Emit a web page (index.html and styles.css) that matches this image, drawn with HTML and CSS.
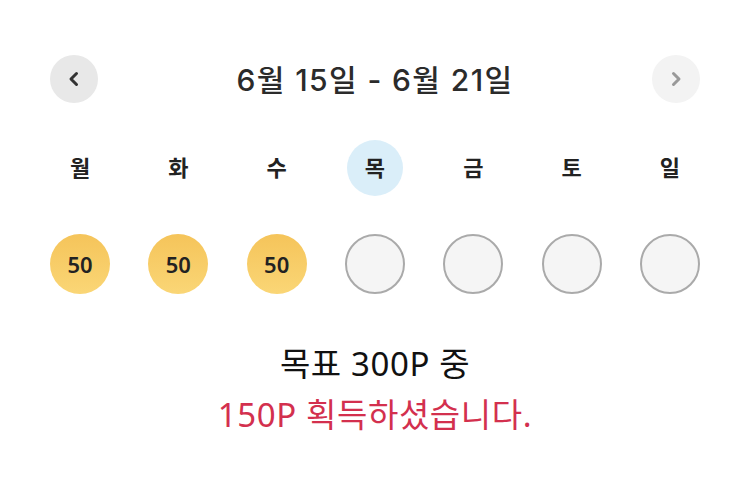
FILE: index.html
```html
<!DOCTYPE html>
<html lang="ko">
<head>
    <meta charset="UTF-8">
    <meta name="viewport" content="width=device-width, initial-scale=1.0">
    <title>출석 체크</title>
    <link rel="stylesheet" href="styles.css">
</head>
<body>
    <div class="card">
        <div class="week-nav">
            <button class="nav-btn prev">
                <svg width="16" height="16" viewBox="0 0 16 16"><path d="M10.5 2.5 5 8 10.5 13.5" fill="none" stroke="#333" stroke-width="3" stroke-linecap="round" stroke-linejoin="round"/></svg>
            </button>
            <h2 class="week-title">6월 15일 - 6월 21일</h2>
            <button class="nav-btn next">
                <svg width="16" height="16" viewBox="0 0 16 16"><path d="M5.5 2.5 11 8 5.5 13.5" fill="none" stroke="#999" stroke-width="3" stroke-linecap="round" stroke-linejoin="round"/></svg>
            </button>
        </div>
        <div class="days">
            <span class="day">월</span>
            <span class="day">화</span>
            <span class="day">수</span>
            <span class="day today">목</span>
            <span class="day">금</span>
            <span class="day">토</span>
            <span class="day">일</span>
        </div>
        <div class="coins">
            <span class="coin done">50</span>
            <span class="coin done">50</span>
            <span class="coin done">50</span>
            <span class="coin"></span>
            <span class="coin"></span>
            <span class="coin"></span>
            <span class="coin"></span>
        </div>
        <div class="summary">
            <p class="goal">목표 300P 중</p>
            <p class="earned">150P 획득하셨습니다.</p>
        </div>
    </div>
</body>
</html>
```

FILE: styles.css
```css
*{
    margin: 0;
    padding: 0;
    box-sizing: border-box;
}
body{
    background: #fff;
    font-family: "Noto Sans CJK KR", "Noto Sans", sans-serif;
}
.card{
    padding: 55px 50px 0 50px;
}
.week-nav{
    display: flex;
    align-items: center;
    justify-content: space-between;
}
.nav-btn{
    width: 48px;
    height: 48px;
    border-radius: 50%;
    border: 0;
    display: flex;
    align-items: center;
    justify-content: center;
}
.nav-btn.prev{
    background: #e8e8e8;
}
.nav-btn.next{
    background: #f3f3f3;
}
.week-title{
    font-family: Inter, "Noto Sans CJK KR", sans-serif;
    font-size: 30px;
    font-weight: 500;
    color: #2b2b2b;
    letter-spacing: 1.4px;
    margin-top: -2px;
}
.days{
    display: flex;
    justify-content: space-between;
    margin-top: 37px;
}
.day{
    width: 60px;
    height: 56px;
    display: flex;
    align-items: center;
    justify-content: center;
    font-size: 22px;
    font-weight: 700;
    color: #222;
    padding-bottom: 4px;
}
.day.today{
    background: #daeef9;
    border-radius: 50%;
    width: 56px;
    margin: 0 2px;
}
.coins{
    display: flex;
    justify-content: space-between;
    margin-top: 38px;
}
.coin{
    width: 60px;
    height: 60px;
    border-radius: 50%;
    background: #f5f5f5;
    border: 2px solid #aaa;
    display: flex;
    align-items: center;
    justify-content: center;
    font-family: "Noto Sans", sans-serif;
    font-size: 22px;
    font-weight: 600;
    color: #222;
}
.coin.done{
    border: 0;
    background: linear-gradient(180deg, #f5c45a, #fad676);
}
.summary{
    margin-top: 47px;
    text-align: center;
    font-family: "Noto Sans", "Noto Sans CJK KR", sans-serif;
    font-size: 33px;
    letter-spacing: 0.6px;
}
.goal{
    color: #111;
    line-height: 46px;
}
.earned{
    color: #d3304e;
    line-height: 46px;
    margin-top: 5px;
}
```
